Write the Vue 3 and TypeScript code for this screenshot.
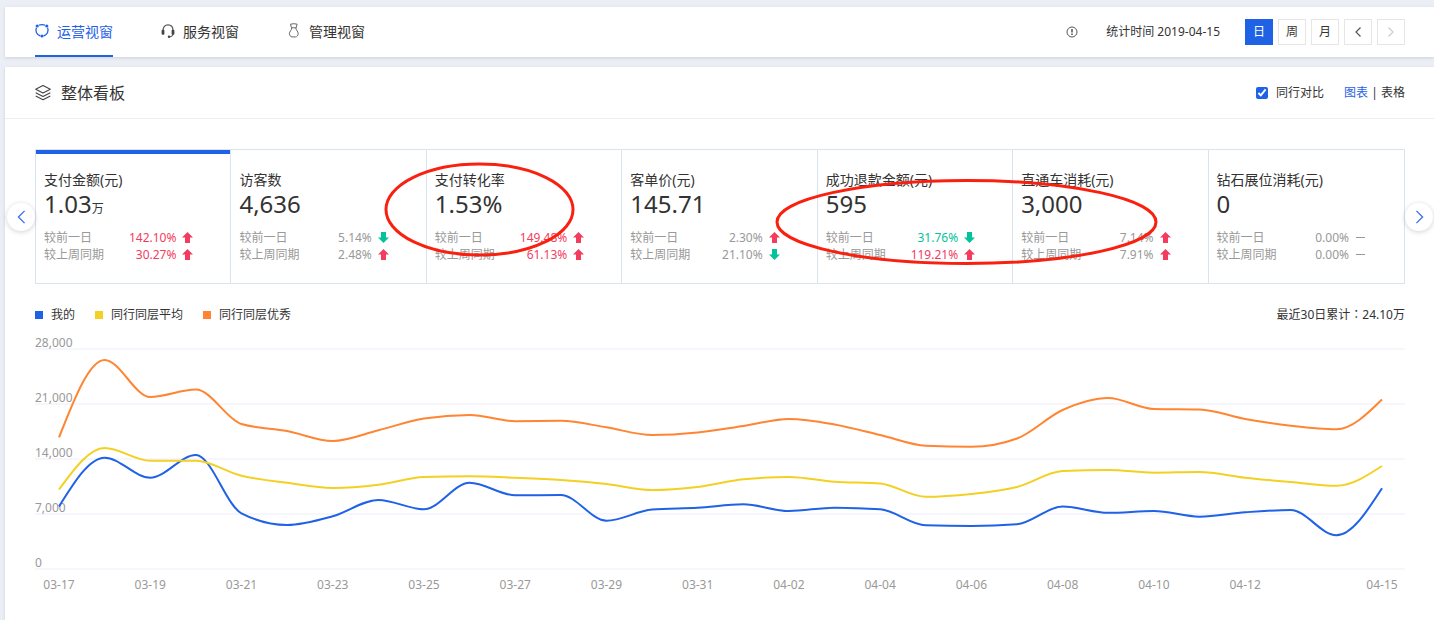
<script setup lang="ts">
import { computed, ref } from 'vue'

type Trend = 'up' | 'down' | 'flat'

interface Change {
  label: string
  value: string
  trend: Trend
  tone?: 'red' | 'green'
}

interface Metric {
  name: string
  value: string
  unit?: string
  changes: Change[]
}

interface Series {
  name: string
  color: string
  values: number[]
}

const tabs = [
  { id: 'operation', label: '运营视窗' },
  { id: 'service', label: '服务视窗' },
  { id: 'management', label: '管理视窗' },
]
const activeTab = ref('operation')

const periods = ['日', '周', '月']
const activePeriod = ref('日')
const comparePeers = ref(true)
const activeMetric = ref(0)

function changes(
  day: string, dayTrend: Trend, week: string, weekTrend: Trend,
  dayTone?: 'red' | 'green', weekTone?: 'red' | 'green',
): Change[] {
  return [
    { label: '较前一日', value: day, trend: dayTrend, tone: dayTone },
    { label: '较上周同期', value: week, trend: weekTrend, tone: weekTone },
  ]
}

const metrics: Metric[] = [
  { name: '支付金额(元)', value: '1.03', unit: '万', changes: changes('142.10%', 'up', '30.27%', 'up', 'red', 'red') },
  { name: '访客数', value: '4,636', changes: changes('5.14%', 'down', '2.48%', 'up') },
  { name: '支付转化率', value: '1.53%', changes: changes('149.48%', 'up', '61.13%', 'up', 'red', 'red') },
  { name: '客单价(元)', value: '145.71', changes: changes('2.30%', 'up', '21.10%', 'down') },
  { name: '成功退款金额(元)', value: '595', changes: changes('31.76%', 'down', '119.21%', 'up', 'green', 'red') },
  { name: '直通车消耗(元)', value: '3,000', changes: changes('7.14%', 'up', '7.91%', 'up') },
  { name: '钻石展位消耗(元)', value: '0', changes: changes('0.00%', 'flat', '0.00%', 'flat') },
]

const series: Series[] = [
  {
    name: '我的',
    color: '#1f62e6',
    values: [7950, 14170, 11620, 14510, 7090, 5600, 6710, 8780, 7600, 10980, 9380, 9420, 6150, 7560, 7790,
      8230, 7380, 7810, 7600, 5560, 5470, 5690, 7950, 7150, 7380, 6660, 7220, 7510, 4290, 10270],
  },
  {
    name: '同行同层平均',
    color: '#f3d024',
    values: [10120, 15400, 13770, 13770, 11870, 10970, 10310, 10720, 11710, 11800, 11610, 11330, 10820, 10050, 10440,
      11420, 11710, 11110, 10890, 9190, 9550, 10440, 12470, 12600, 12260, 12350, 11620, 11070, 10600, 13110],
  },
  {
    name: '同行同层优秀',
    color: '#ff8533',
    values: [16740, 26600, 21890, 22830, 18450, 17560, 16290, 17650, 19150, 19600, 18810, 18860, 18030, 17050, 17370,
      18200, 19090, 18390, 17050, 15680, 15550, 16610, 20240, 21760, 20360, 20300, 19090, 18230, 17780, 21570],
  },
]

const plot = { width: 1370, left: 24, right: 1347, top: 20, bottom: 240, max: 28000 }
const ticks = [28000, 21000, 14000, 7000, 0]
const pointCount = 30

function xAt(index: number): number {
  return plot.left + ((plot.right - plot.left) * index) / (pointCount - 1)
}
function yAt(value: number): number {
  return plot.bottom - ((plot.bottom - plot.top) * value) / plot.max
}

function dateAt(index: number): string {
  const date = new Date(Date.UTC(2019, 2, 17 + index))
  return date.toISOString().slice(5, 10)
}

const dateLabels = [0, 2, 4, 6, 8, 10, 12, 14, 16, 18, 20, 22, 24, 26, 29].map((index) => ({
  text: dateAt(index),
  x: `${((xAt(index) / plot.width) * 100).toFixed(3)}%`,
}))

// Monotone cubic interpolation, so the curve never overshoots a data point.
function curve(values: number[]): string {
  const h = xAt(1) - xAt(0)
  const ys = values.map(yAt)
  const secants = ys.slice(1).map((y, i) => (y - ys[i]) / h)
  const slopes = ys.map((_, i) => {
    if (i === 0 || i === ys.length - 1) return 0
    const a = secants[i - 1]
    const b = secants[i]
    if (a * b <= 0) return 0
    return Math.sign(a) * Math.min(2 * Math.abs(a), 2 * Math.abs(b), Math.abs(a + b) / 2)
  })
  const last = ys.length - 1
  slopes[0] = (3 * secants[0] - slopes[1]) / 2
  slopes[last] = (3 * secants[last - 1] - slopes[last - 1]) / 2
  let d = `M${xAt(0)},${ys[0]}`
  for (let i = 0; i < last; i++) {
    const x0 = xAt(i)
    const x1 = xAt(i + 1)
    d += `C${x0 + h / 3},${ys[i] + (slopes[i] * h) / 3} ${x1 - h / 3},${ys[i + 1] - (slopes[i + 1] * h) / 3} ${x1},${ys[i + 1]}`
  }
  return d
}

const visibleSeries = computed(() => (comparePeers.value ? series : series.slice(0, 1)))
const curves = computed(() => visibleSeries.value.map((s) => ({ ...s, d: curve(s.values) })))
</script>

<template>
  <div class="page">
    <header class="topbar">
      <nav class="tabs">
        <a
          v-for="tab in tabs"
          :key="tab.id"
          href="#"
          class="tab"
          :class="{ active: tab.id === activeTab }"
          @click.prevent="activeTab = tab.id"
        >
          <svg class="tab-icon" viewBox="0 0 14 16" aria-hidden="true">
            <g v-if="tab.id === 'operation'">
              <path d="M4 1.2Q7 -.1 10 1.2M1.400 3.800A6 6 0 0 0 5.400 12M12.600 3.800A6 6 0 0 1 8.600 12" fill="none" stroke="currentColor" stroke-width="1.300" />
              <circle cx="2.200" cy="2" r="1.600" fill="currentColor" />
              <circle cx="11.800" cy="2" r="1.600" fill="currentColor" />
              <circle cx="7" cy="12" r="1.500" fill="currentColor" />
            </g>
            <g v-else-if="tab.id === 'service'">
              <path d="M2 6.500C2 3 4 .8 7 .8s5 2.200 5 5.700M12.200 9.500Q11.600 12.600 8.600 12.800" fill="none" stroke="#555" stroke-width="1.200" />
              <rect x=".6" y="5.800" width="2.800" height="5" rx="1" fill="#444" />
              <rect x="10.600" y="5.800" width="2.800" height="5" rx="1" fill="#444" />
              <circle cx="8" cy="12.700" r="1.200" fill="#444" />
            </g>
            <g v-else fill="none" stroke="#666" stroke-width="1">
              <path d="M3.500 .2L4.500 3.800H9.100L10.100 .2Q6.800 -.8 3.500 .2Z" />
              <path d="M4.700 4C4.700 6.500 2.400 7.200 2.400 9.700C2.400 11.200 3.700 12.900 5 12.900H8.600C9.900 12.900 11.200 11.200 11.200 9.700C11.200 7.200 8.900 6.500 8.900 4" />
            </g>
          </svg>
          <span>{{ tab.label }}</span>
        </a>
      </nav>

      <div class="tools">
        <svg class="info" viewBox="0 0 12 12" aria-hidden="true">
          <circle cx="6" cy="6" r="5" fill="none" stroke="#555" />
          <path d="M6 3v3.500M6 7.600V9" fill="none" stroke="#444" stroke-width="1.400" />
        </svg>
        <span class="date">统计时间 2019-04-15</span>
        <div class="periods">
          <button
            v-for="period in periods"
            :key="period"
            type="button"
            class="square"
            :class="{ active: period === activePeriod }"
            @click="activePeriod = period"
          >{{ period }}</button>
          <button type="button" class="square" aria-label="前一天">
            <svg class="step" viewBox="0 0 8 12"><path d="M6.500 1.500L2 6l4.500 4.500" fill="none" stroke="#555" stroke-width="1.200" /></svg>
          </button>
          <button type="button" class="square" aria-label="后一天" disabled>
            <svg class="step" viewBox="0 0 8 12"><path d="M1.500 1.500L6 6l-4.500 4.500" fill="none" stroke="#ccc" stroke-width="1.200" /></svg>
          </button>
        </div>
      </div>
    </header>

    <main class="panel">
      <div class="panel-head">
        <svg class="layers" viewBox="0 0 16 16" aria-hidden="true">
          <path d="M8 .5L15.300 4.300L8 8.100L.7 4.300ZM.7 7.700L8 11.500L15.300 7.700M.7 10.900L8 14.700L15.300 10.900" fill="none" stroke="#444" stroke-width="1.100" stroke-linejoin="round" />
        </svg>
        <h2>整体看板</h2>
        <div class="head-tools">
          <label class="compare">
            <input v-model="comparePeers" type="checkbox" />
            <span>同行对比</span>
          </label>
          <div class="views">
            <a href="#" class="current" @click.prevent>图表</a>
            <span class="bar">|</span>
            <a href="#" @click.prevent>表格</a>
          </div>
        </div>
      </div>

      <div class="panel-body">
        <section class="carousel">
          <div class="cards">
            <button
              v-for="(metric, index) in metrics"
              :key="metric.name"
              type="button"
              class="card"
              :class="{ active: index === activeMetric }"
              @click="activeMetric = index"
            >
              <span class="name">{{ metric.name }}</span>
              <span class="figure">{{ metric.value }}<small v-if="metric.unit">{{ metric.unit }}</small></span>
              <span class="changes">
                <span v-for="change in metric.changes" :key="change.label" class="change" :class="change.tone">
                  <span class="change-label">{{ change.label }}</span>
                  <span>{{ change.value }}</span>
                  <svg class="arrow" viewBox="0 0 11 11" aria-hidden="true">
                    <path v-if="change.trend === 'up'" d="M5.500 0L11 5.500H8V11H3V5.500H0Z" fill="#f43c5e" />
                    <path v-else-if="change.trend === 'down'" d="M5.500 11L0 5.500H3V0H8V5.500H11Z" fill="#05c29b" />
                    <path v-else d="M1 5h9v1H1Z" fill="#999" />
                  </svg>
                </span>
              </span>
            </button>
          </div>
          <svg class="marks" viewBox="0 0 1370 135" preserveAspectRatio="none" aria-hidden="true">
            <ellipse cx="444.500" cy="60.500" rx="93.500" ry="45.500" />
            <ellipse cx="931.500" cy="73" rx="189.500" ry="41.500" />
          </svg>
          <button type="button" class="slide prev" aria-label="上一组">
            <svg viewBox="0 0 10 16"><path d="M8.500 1L1.500 8l7 7" /></svg>
          </button>
          <button type="button" class="slide next" aria-label="下一组">
            <svg viewBox="0 0 10 16"><path d="M1.500 1L8.500 8l-7 7" /></svg>
          </button>
        </section>

        <div class="legend">
          <span v-for="item in visibleSeries" :key="item.name" class="legend-item">
            <svg class="swatch" viewBox="0 0 8 8" aria-hidden="true"><rect width="8" height="8" :fill="item.color" /></svg>
            <span>{{ item.name }}</span>
          </span>
          <span class="total">最近30日累计<span class="colon">：</span>24.10万</span>
        </div>

        <svg class="chart" role="img" aria-label="最近30日支付金额走势">
          <g v-for="tick in ticks" :key="tick">
            <rect x="0" :y="yAt(tick) - 1" width="100%" height="2" fill="#f6f6fc" />
            <text x="0" :y="yAt(tick) - 2">{{ tick.toLocaleString('en-US') }}</text>
          </g>
          <svg width="100%" height="266" viewBox="0 0 1370 266" preserveAspectRatio="none">
            <path
              v-for="item in curves"
              :key="item.name"
              class="line"
              :d="item.d"
              :stroke="item.color"
            />
          </svg>
          <text v-for="label in dateLabels" :key="label.text" :x="label.x" y="260" text-anchor="middle">{{ label.text }}</text>
        </svg>
      </div>
    </main>
  </div>
</template>

<style>
body {
  margin: 0;
  background: #ebeff5;
}
</style>

<style scoped>
.page {
  box-sizing: border-box;
  display: flex;
  flex-direction: column;
  gap: 10px;
  min-height: 100vh;
  padding: 7px 0 0 5px;
  background: #ebeff5;
  color: #333;
  font-family: "Noto Sans", "Noto Sans CJK SC", sans-serif;
  font-size: 12px;
  line-height: 18px;
}

a {
  color: inherit;
  text-decoration: none;
}

button {
  margin: 0;
  border: 0;
  padding: 0;
  background: none;
  color: inherit;
  font: inherit;
  cursor: pointer;
}

svg {
  display: block;
}

.topbar {
  display: flex;
  align-items: center;
  justify-content: space-between;
  height: 50px;
  padding: 0 29px 0 30px;
  background: #fff;
  box-shadow: 0 1px 3px rgba(40, 50, 80, 0.16);
}

.tabs {
  display: flex;
  align-self: stretch;
  gap: 48px;
}

.tab {
  box-sizing: border-box;
  display: flex;
  align-items: center;
  gap: 8px;
  border-top: 2px solid transparent;
  border-bottom: 2px solid transparent;
  font-size: 14px;
}

.tab.active {
  border-bottom-color: #1f62e6;
  color: #1f62e6;
}

.tab-icon {
  width: 14px;
  height: 16px;
  overflow: visible;
}

.tools {
  display: flex;
  align-items: center;
}

.info {
  width: 12px;
  height: 12px;
  margin-right: 28px;
}

.date {
  margin-right: 25px;
}

.periods {
  display: flex;
  gap: 5px;
}

.square {
  box-sizing: border-box;
  display: flex;
  align-items: center;
  justify-content: center;
  width: 28px;
  height: 26px;
  border: 1px solid #e6e6e6;
}

.square.active {
  border-color: #1f62e6;
  background: #1f62e6;
  color: #fff;
}

.step {
  width: 8px;
  height: 12px;
}

.panel {
  flex: 1;
  background: #fff;
  box-shadow: 0 1px 3px rgba(40, 50, 80, 0.16);
}

.panel-head {
  display: flex;
  align-items: center;
  gap: 10px;
  height: 51px;
  padding: 0 29px 0 30px;
  border-bottom: 1px solid #ededf0;
}

.layers {
  width: 16px;
  height: 16px;
}

h2 {
  margin: 0;
  font-size: 16px;
  font-weight: 400;
}

.head-tools {
  display: flex;
  align-items: center;
  gap: 20px;
  margin-left: auto;
}

.compare {
  display: flex;
  align-items: center;
  gap: 8px;
}

.compare input {
  width: 12px;
  height: 12px;
  margin: 0;
  accent-color: #1f62e6;
}

.views {
  display: flex;
  gap: 5px;
}

.views .current {
  color: #1f62e6;
}

.bar {
  display: flex;
  justify-content: center;
  width: 3px;
}

.panel-body {
  padding: 30px 29px 20px 30px;
}

.carousel {
  position: relative;
}

.cards {
  display: grid;
  grid-template-columns: repeat(7, 1fr);
  border: 1px solid #dae4ee;
}

.card {
  box-sizing: border-box;
  display: flex;
  flex-direction: column;
  border-right: 1px solid #dae4ee;
  padding: 20px 37px 20px 8px;
  text-align: left;
}

.card:last-child {
  border-right-color: transparent;
}

.card.active {
  box-shadow: inset 0 4px #1f62e6;
}

.name {
  font-size: 14px;
  line-height: 20px;
  white-space: nowrap;
}

.figure {
  height: 28px;
  font-size: 24px;
  line-height: 28px;
}

.figure small {
  font-size: 12px;
  line-height: 12px;
}

.changes {
  display: block;
  margin-top: 11px;
  line-height: 17px;
  color: #999;
}

.change {
  display: flex;
  align-items: center;
  gap: 6px;
}

.change-label {
  margin-right: auto;
  color: #999;
}

.change.red {
  color: #f43c5e;
}

.change.green {
  color: #05c29b;
}

.arrow {
  width: 11px;
  height: 11px;
}

.marks {
  position: absolute;
  inset: 0;
  width: 100%;
  height: 100%;
  overflow: visible;
  pointer-events: none;
}

.marks ellipse {
  fill: none;
  stroke: #f9200f;
  stroke-width: 3px;
  vector-effect: non-scaling-stroke;
}

.slide {
  position: absolute;
  top: 50%;
  display: flex;
  align-items: center;
  justify-content: center;
  width: 28px;
  height: 28px;
  margin-top: -14px;
  border-radius: 50%;
  background: #fff;
  box-shadow: 0 1px 5px rgba(0, 0, 0, 0.18);
}

.slide svg {
  width: 9px;
  height: 14px;
}

.slide path {
  fill: none;
  stroke: #3f76ea;
  stroke-width: 1.6;
}

.prev {
  right: 100%;
}

.next {
  left: 100%;
}

.legend {
  display: flex;
  gap: 20px;
  margin-top: 21px;
}

.legend-item {
  display: flex;
  align-items: center;
  gap: 8px;
}

.swatch {
  width: 8px;
  height: 8px;
}

.total {
  margin-left: auto;
}

.colon {
  font-family: "Noto Sans CJK TC", sans-serif;
}

.chart {
  width: 100%;
  height: 266px;
  margin-top: 5px;
}

.chart text {
  fill: #999;
  font-size: 12px;
}

.line {
  fill: none;
  stroke-width: 2px;
  vector-effect: non-scaling-stroke;
}
</style>
